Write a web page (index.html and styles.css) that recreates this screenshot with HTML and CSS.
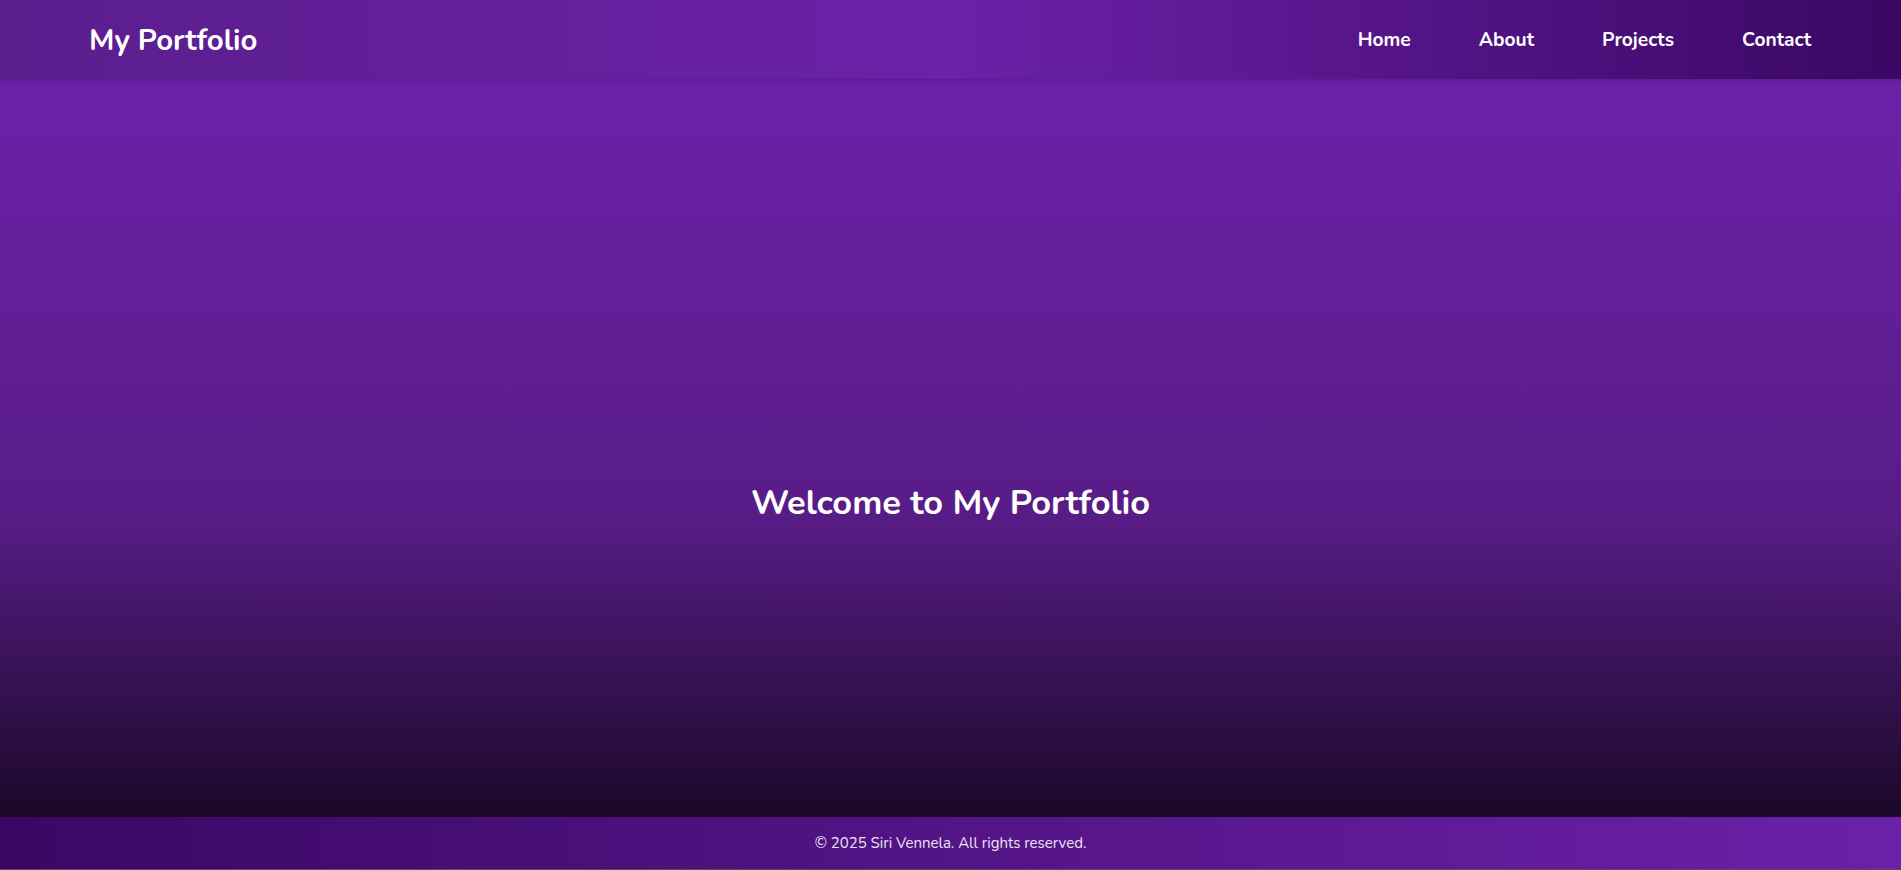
FILE: index.html
```html
<!DOCTYPE html>
<html lang="en">
<head>
<meta charset="utf-8">
<title>My Portfolio</title>
<link rel="stylesheet" href="styles.css">
</head>
<body>
<div class="page">
  <header class="site-header">
    <div class="logo">My Portfolio</div>
    <nav class="nav">
      <a href="#" class="nav-link">Home</a>
      <a href="#" class="nav-link">About</a>
      <a href="#" class="nav-link">Projects</a>
      <a href="#" class="nav-link">Contact</a>
    </nav>
  </header>
  <main class="hero">
    <h1 class="hero-title">Welcome to My Portfolio</h1>
  </main>
  <footer class="site-footer">
    <p class="footer-text">© 2025 Siri Vennela. All rights reserved.</p>
  </footer>
  <div class="bottom-line"></div>
</div>
</body>
</html>
```

FILE: styles.css
```css
* {
  box-sizing: border-box;
}

html, body {
  margin: 0;
  padding: 0;
}

body {
  font-family: "Nunito", "Lato", "Noto Sans", sans-serif;
  color: #ffffff;
  background: #5c4a5a;
}

.page {
  display: flex;
  flex-direction: column;
  height: 870px;
  overflow: hidden;
}

.site-header {
  flex: 0 0 79px;
  display: flex;
  align-items: center;
  justify-content: space-between;
  padding: 0 90px 0 89px;
  background: linear-gradient(90deg, #5a1e8d 0%, #6b21a8 50%, #3b0764 100%);
  box-shadow: 0 2px 4px rgba(0, 0, 0, 0.15);
  position: relative;
  z-index: 1;
}

.logo {
  font-size: 29.3px;
  font-weight: 700;
}

.nav {
  display: flex;
  gap: 68px;
}

.nav-link {
  color: #ffffff;
  text-decoration: none;
  font-size: 19.2px;
  font-weight: 700;
}

.hero {
  flex: 1 1 auto;
  display: flex;
  align-items: center;
  justify-content: center;
  padding-top: 108px;
  background: linear-gradient(180deg, #6c21a9 0px, #581c87 435px, #000000 870px);
  background-size: 100% 870px;
  background-repeat: no-repeat;
}

.hero-title {
  margin: 0;
  font-size: 34.4px;
  font-weight: 700;
}

.site-footer {
  flex: 0 0 52px;
  display: flex;
  align-items: center;
  justify-content: center;
  background: linear-gradient(90deg, #3b0764 0%, #6b21a8 100%);
}

.footer-text {
  margin: 0;
  font-size: 15px;
  color: #ece4f4;
}

.bottom-line {
  flex: 0 0 1px;
  background: #5c4a5a;
}
```
